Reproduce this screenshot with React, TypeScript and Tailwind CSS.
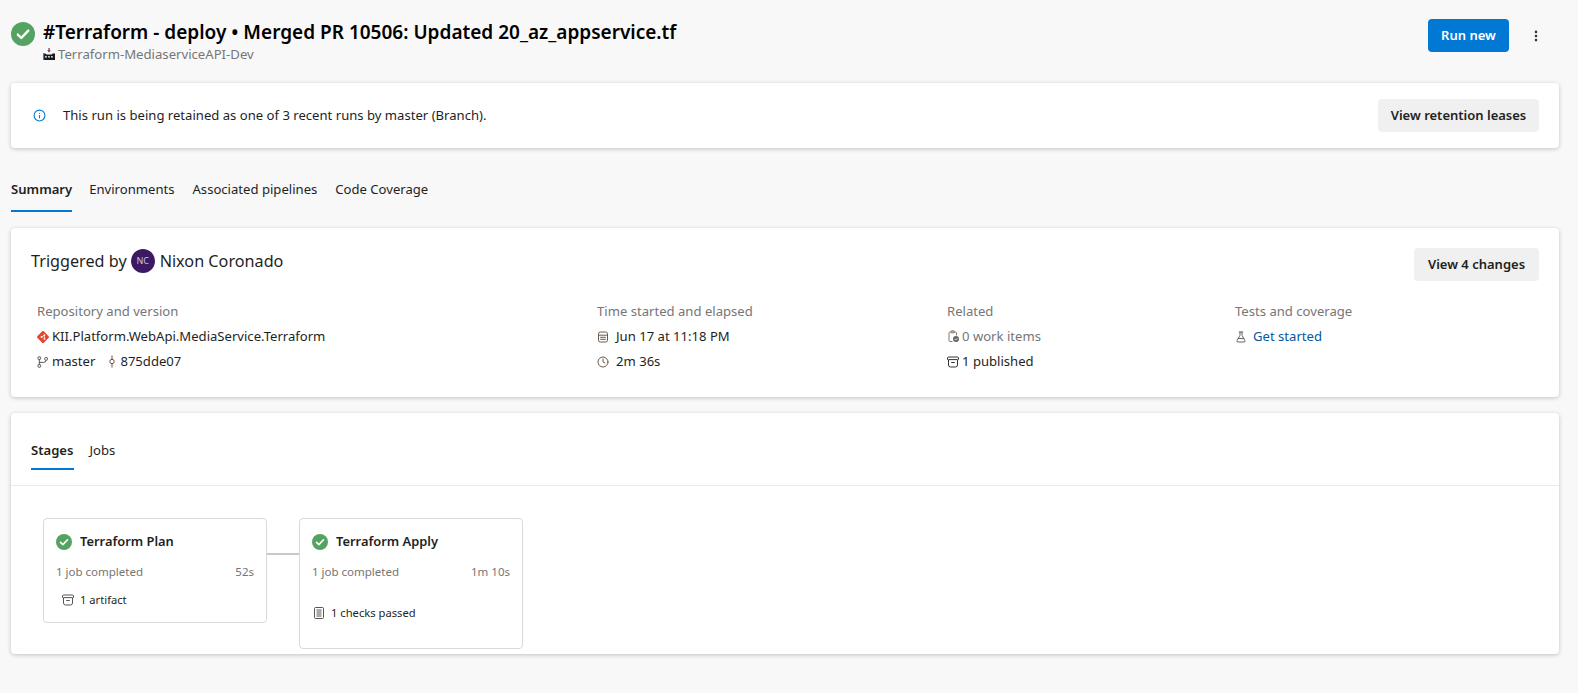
import { MoreVertical, Info, FlaskConical, Clock } from "lucide-react";

const font = "font-['Noto_Sans','Open_Sans',sans-serif]";

function CheckCircle({ size }: { size: number }) {
  return (
    <svg width={size} height={size} viewBox="0 0 24 24" className="shrink-0">
      <circle cx="12" cy="12" r="12" fill="#55a362" />
      <path d="M6.8 12.6l3.5 3.4 7-7.4" fill="none" stroke="#fff" strokeWidth="2.4" strokeLinecap="round" strokeLinejoin="round" />
    </svg>
  );
}

function ArtifactIcon({ color = "#333" }: { color?: string }) {
  return (
    <svg width="12" height="12" viewBox="0 0 12 12" fill="none" stroke={color} strokeWidth="1" className="shrink-0">
      <path d="M1.2 1h9.6l.7.9v1.1a1 1 0 0 1-1 1V9a2 2 0 0 1-2 2H3.5a2 2 0 0 1-2-2V4a1 1 0 0 1-1-1V1.9z" />
      <path d="M1.5 3.6h9M4.2 6.5h3.6" />
    </svg>
  );
}

function RepoIcon() {
  return (
    <svg width="12" height="12" viewBox="0 0 12 12" className="shrink-0">
      <rect x="1.4" y="1.4" width="9.2" height="9.2" rx="1.2" transform="rotate(45 6 6)" fill="#e8452c" />
      <circle cx="4.6" cy="6" r="1" fill="#fff" />
      <circle cx="7.4" cy="4.2" r="0.9" fill="#fff" />
      <circle cx="7.4" cy="7.8" r="0.9" fill="#fff" />
      <path d="M4.6 6L7.4 4.2M7.4 4.2V7.8" stroke="#fff" strokeWidth="0.7" />
    </svg>
  );
}

function BranchIcon() {
  return (
    <svg width="12" height="12" viewBox="0 0 12 12" fill="none" stroke="#555" strokeWidth="1" className="shrink-0">
      <rect x="1" y="0.8" width="2.6" height="2.6" rx="0.6" />
      <rect x="1" y="8.6" width="2.6" height="2.6" rx="0.6" />
      <rect x="7.8" y="1.6" width="2.6" height="2.6" rx="0.6" />
      <path d="M2.3 3.4v5.2M2.3 6.4h4a2.6 2.6 0 0 0 2.8-2.2" />
    </svg>
  );
}

function CommitIcon() {
  return (
    <svg width="8" height="13" viewBox="0 0 8 13" fill="none" stroke="#7a4a3a" strokeWidth="1" className="shrink-0">
      <circle cx="4" cy="6.5" r="2.2" />
      <path d="M4 0.5v3.8M4 8.7v3.8" />
    </svg>
  );
}

function PipelineIcon() {
  return (
    <svg width="12" height="12" viewBox="0 0 12 12" className="shrink-0">
      <path d="M6 0v3.2" stroke="#7a3a5a" strokeWidth="1.2" />
      <path d="M4.2 2.2L6 4.4l1.8-2.2z" fill="#7a3a5a" />
      <path d="M0 12V5.6h2.4l1 1h5.2l1-1H12V12z" fill="#1a1a1a" />
      <rect x="2.2" y="8" width="1.5" height="1.6" fill="#e8f0fa" />
      <rect x="5.2" y="8" width="1.5" height="1.6" fill="#e8f0fa" />
      <rect x="8.2" y="8" width="1.5" height="1.6" fill="#e8f0fa" />
      <path d="M0 5.6h1.2V12H0z" fill="#2f7fd0" />
    </svg>
  );
}

function CalendarIcon() {
  return (
    <svg width="12" height="12" viewBox="0 0 12 12" fill="none" stroke="#6b5a4c" strokeWidth="1" className="shrink-0">
      <rect x="1.5" y="1" width="9" height="10" rx="1.8" />
      <path d="M1.5 4.2h9M3.2 6.3h5.6M3.2 8.3h5.6" />
    </svg>
  );
}

function WorkItemIcon() {
  return (
    <svg width="13" height="13" viewBox="0 0 13 13" fill="none" stroke="#8a7a6a" strokeWidth="1" className="shrink-0">
      <path d="M5.5 11.5H3a1 1 0 0 1-1-1V3a1 1 0 0 1 1-1h5.5a1 1 0 0 1 1 1v2.5" />
      <rect x="4" y="0.8" width="3.4" height="2" rx="0.6" />
      <circle cx="9" cy="9" r="3" fill="#666" stroke="none" />
      <path d="M7.7 9l1 1 1.6-1.8" stroke="#fff" strokeWidth="0.8" />
    </svg>
  );
}

function ChecklistIcon() {
  return (
    <svg width="10" height="12" viewBox="0 0 10 12" fill="none" stroke="#555" strokeWidth="1" className="shrink-0">
      <rect x="0.5" y="0.5" width="9" height="11" rx="1" />
      <path d="M2.5 3h5M2.5 5h5M2.5 7h5M2.5 9h5" />
    </svg>
  );
}

function Card({ className = "", children }: { className?: string; children: React.ReactNode }) {
  return <div className={`bg-white rounded shadow-[0_1px_4px_rgba(0,0,0,0.22)] ${className}`}>{children}</div>;
}

function StageCard(props: { name: string; time: string; height: string; children: React.ReactNode }) {
  return (
    <div className={`w-[224px] ${props.height} rounded border border-[#d9d9d9] bg-white px-[12px] pt-[12px]`}>
      <div className="flex items-center gap-2 h-[22px]">
        <CheckCircle size={16} />
        <span className="text-[12.9px] font-semibold text-[#1f1f1f]">{props.name}</span>
      </div>
      <div className="flex justify-between mt-[10px] text-[11.5px] leading-[18px] text-[#757575]">
        <span>1 job completed</span>
        <span>{props.time}</span>
      </div>
      {props.children}
    </div>
  );
}

export default function App() {
  return (
    <div className={`${font} w-[1578px] h-[693px] overflow-hidden bg-[#f8f8f8] pl-[11px] pr-[19px] text-[#1f1f1f]`}>
      {/* header */}
      <div className="flex h-[83px] items-start pt-[19px]">
        <div className="mt-[3px]"><CheckCircle size={24} /></div>
        <div className="ml-[8px] flex-1">
          <div className="text-[19px] leading-[26px] font-semibold text-black">
            #Terraform - deploy • Merged PR 10506: Updated 20_az_appservice.tf
          </div>
          <div className="flex items-center gap-[3px] text-[13.15px] leading-[18px] text-[#767676]">
            <PipelineIcon />
            Terraform-MediaserviceAPI-Dev
          </div>
        </div>
        <button className="h-[33px] w-[81px] rounded-sm bg-[#0078d4] text-[13px] font-semibold text-white">Run new</button>
        <div className="ml-[17px] mr-[13px] flex h-[33px] w-[20px] items-center justify-center text-[#333]">
          <MoreVertical size={14} strokeWidth={2.5} />
        </div>
      </div>

      {/* retention banner */}
      <Card className="flex h-[65px] items-center pl-[22px] pr-[20px]">
        <Info size={13} className="text-[#0078d4]" />
        <span className="ml-[17px] mt-[1px] flex-1 text-[13.1px]">This run is being retained as one of 3 recent runs by master (Branch).</span>
        <button className="h-[33px] w-[161px] rounded-sm bg-[#f0f0f0] text-[13px] font-semibold text-[#222]">View retention leases</button>
      </Card>

      {/* tabs */}
      <div className="flex h-[80px] pt-[30px] text-[13.1px]">
        <div className="h-[34px] border-b-2 border-[#0078d4] font-semibold leading-[22px]">Summary</div>
        <div className="ml-[17px] leading-[22px]">Environments</div>
        <div className="ml-[18px] leading-[22px]">Associated pipelines</div>
        <div className="ml-[18px] leading-[22px]">Code Coverage</div>
      </div>

      {/* summary */}
      <Card className="h-[169px] px-[20px] pt-[20px]">
        <div className="flex items-start justify-between">
          <div className="flex h-[26px] items-center text-[16.2px]">
            Triggered by
            <span className="ml-[4px] mr-[5px] flex h-[24px] w-[24px] items-center justify-center rounded-full bg-[#3b1a63] text-[9px] text-[#cfc4de]">NC</span>
            Nixon Coronado
          </div>
          <button className="h-[33px] w-[125px] rounded-sm bg-[#f0f0f0] text-[13px] font-semibold text-[#222]">View 4 changes</button>
        </div>
        <div className="mt-[18px] flex pl-[6px] text-[13.1px] leading-[25px]">
          <div className="w-[560px]">
            <div className="text-[#767676]">Repository and version</div>
            <div className="flex items-center gap-[3px]"><RepoIcon />KII.Platform.WebApi.MediaService.Terraform</div>
            <div className="flex items-center">
              <BranchIcon />
              <span className="ml-[3px]">master</span>
              <span className="ml-[13px]"><CommitIcon /></span>
              <span className="ml-[4px]">875dde07</span>
            </div>
          </div>
          <div className="w-[350px]">
            <div className="text-[#767676]">Time started and elapsed</div>
            <div className="flex items-center gap-[7px]"><CalendarIcon />Jun 17 at 11:18 PM</div>
            <div className="flex items-center gap-[7px]"><Clock size={12} className="text-[#6b5a4c]" />2m 36s</div>
          </div>
          <div className="w-[288px]">
            <div className="text-[#767676]">Related</div>
            <div className="flex items-center gap-[2px] text-[#767676]"><WorkItemIcon />0 work items</div>
            <div className="flex items-center gap-[3px]"><ArtifactIcon />1 published</div>
          </div>
          <div>
            <div className="text-[#767676]">Tests and coverage</div>
            <div className="flex items-center gap-[6px] text-[#005a9e]"><FlaskConical size={12} className="text-[#666]" />Get started</div>
          </div>
        </div>
      </Card>

      {/* stages */}
      <Card className="mt-[16px] h-[241px]">
        <div className="flex h-[73px] gap-[16px] border-b border-[#eaeaea] px-[20px] pt-[26px] text-[13.1px]">
          <div className="h-[31px] border-b-2 border-[#0078d4] font-semibold leading-[22px]">Stages</div>
          <div className="leading-[22px]">Jobs</div>
        </div>
        <div className="flex items-start px-[32px] pt-[32px]">
          <StageCard name="Terraform Plan" time="52s" height="h-[105px]">
            <div className="mt-[10px] ml-[6px] flex items-center gap-[6px] text-[11.2px] leading-[18px]">
              <ArtifactIcon color="#555" />1 artifact
            </div>
          </StageCard>
          <div className="mt-[35px] h-[2px] w-[32px] bg-[#c8c8c8]" />
          <StageCard name="Terraform Apply" time="1m 10s" height="h-[131px]">
            <div className="mt-[23px] ml-[2px] flex items-center gap-[7px] text-[11.2px] leading-[18px]">
              <ChecklistIcon />1 checks passed
            </div>
          </StageCard>
        </div>
      </Card>
    </div>
  );
}
